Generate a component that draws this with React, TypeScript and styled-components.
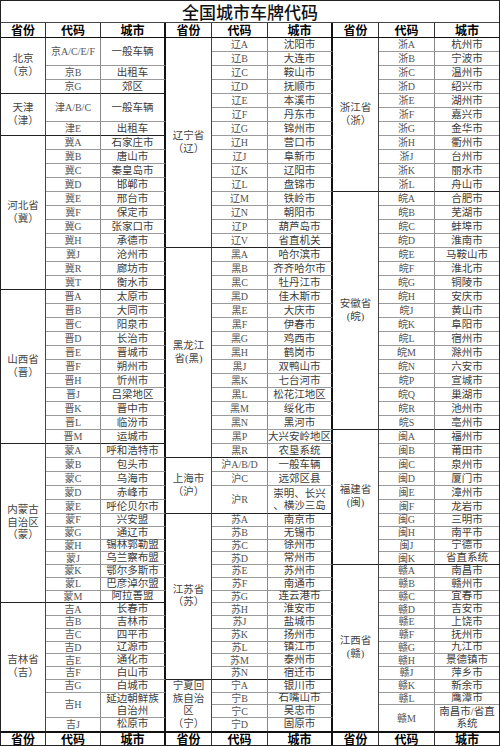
import React from 'react';
import styled, {createGlobalStyle, css} from 'styled-components';

type Entry = {code: string; city: string[]; span: number};
type Province = {name: string[]; entries: Entry[]};

const e = (code: string, city: string, span = 1): Entry => ({code, city: city.split('|'), span});
const list = (prefix: string, pairs: string) =>
    pairs.split(' ').map(p => e(prefix + p.slice(0, 1), p.slice(1)));

const groups: Province[][] = [
    [
        {name: ['北京', '（京）'], entries: [e('京A/C/E/F', '一般车辆', 2), e('京B', '出租车'), e('京G', '郊区')]},
        {name: ['天津', '（津）'], entries: [e('津A/B/C', '一般车辆', 2), e('津E', '出租车')]},
        {name: ['河北省', '（冀）'], entries: list('冀', 'A石家庄市 B唐山市 C秦皇岛市 D邯郸市 E邢台市 F保定市 G张家口市 H承德市 J沧州市 R廊坊市 T衡水市')},
        {name: ['山西省', '（晋）'], entries: list('晋', 'A太原市 B大同市 C阳泉市 D长治市 E晋城市 F朔州市 H忻州市 J吕梁地区 K晋中市 L临汾市 M运城市')},
        {name: ['内蒙古', '自治区', '（蒙）'], entries: list('蒙', 'A呼和浩特市 B包头市 C乌海市 D赤峰市 E呼伦贝尔市 F兴安盟 G通辽市 H锡林郭勒盟 J乌兰察布盟 K鄂尔多斯市 L巴彦淖尔盟 M阿拉善盟')},
        {
            name: ['吉林省', '（吉）'],
            entries: [...list('吉', 'A长春市 B吉林市 C四平市 D辽源市 E通化市 F白山市 G白城市'), e('吉H', '延边朝鲜族|自治州', 2), e('吉J', '松原市')],
        },
    ],
    [
        {name: ['辽宁省', '（辽）'], entries: list('辽', 'A沈阳市 B大连市 C鞍山市 D抚顺市 E本溪市 F丹东市 G锦州市 H营口市 J阜新市 K辽阳市 L盘锦市 M铁岭市 N朝阳市 P葫芦岛市 V省直机关')},
        {name: ['黑龙江', '省(黑)'], entries: list('黑', 'A哈尔滨市 B齐齐哈尔市 C牡丹江市 D佳木斯市 E大庆市 F伊春市 G鸡西市 H鹤岗市 J双鸭山市 K七台河市 L松花江地区 M绥化市 N黑河市 P大兴安岭地区 R农垦系统')},
        {name: ['上海市', '（沪）'], entries: [e('沪A/B/D', '一般车辆'), e('沪C', '远郊区县'), e('沪R', '崇明、长兴|、横沙三岛', 2)]},
        {name: ['江苏省', '（苏）'], entries: list('苏', 'A南京市 B无锡市 C徐州市 D常州市 E苏州市 F南通市 G连云港市 H淮安市 J盐城市 K扬州市 L镇江市 M泰州市 N宿迁市')},
        {name: ['宁夏回', '族自治', '区', '（宁）'], entries: list('宁', 'A银川市 B石嘴山市 C吴忠市 D固原市')},
    ],
    [
        {name: ['浙江省', '（浙）'], entries: list('浙', 'A杭州市 B宁波市 C温州市 D绍兴市 E湖州市 F嘉兴市 G金华市 H衢州市 J台州市 K丽水市 L舟山市')},
        {name: ['安徽省', '(皖)'], entries: list('皖', 'A合肥市 B芜湖市 C蚌埠市 D淮南市 E马鞍山市 F淮北市 G铜陵市 H安庆市 J黄山市 K阜阳市 L宿州市 M滁州市 N六安市 P宣城市 Q巢湖市 R池州市 S亳州市')},
        {name: ['福建省', '(闽)'], entries: list('闽', 'A福州市 B莆田市 C泉州市 D厦门市 E漳州市 F龙岩市 G三明市 H南平市 J宁德市 K省直系统')},
        {
            name: ['江西省', '(赣)'],
            entries: [...list('赣', 'A南昌市 B赣州市 C宜春市 D吉安市 E上饶市 F抚州市 G九江市 H景德镇市 J萍乡市 K新余市 L鹰潭市'), e('赣M', '南昌市/省直|系统', 2)],
        },
    ],
];

const FIRST_BODY_ROW = 3;
const FOOTER_ROW = 54;

type Edge = 'light' | 'dark' | 'none';

const GlobalStyle = createGlobalStyle`
    html, body {
        margin: 0;
        padding: 0;
        background: #fff;
    }
`

const Sheet = styled.div`
    box-sizing: border-box;
    width: 500px;
    height: 746px;
    border: 1px solid #222;
    display: grid;
    grid-template-columns: 45px 55px 65px 46px 56px 65px 46px 56px 64px;
    grid-template-rows: 22px 15px repeat(34, 14px) repeat(17, 12.75px) 1fr;
    font-family: "Liberation Serif", "Noto Sans CJK SC", serif;
    color: #4a4a4a;
    background: #fff;
    overflow: hidden;
`

const Title = styled.div`
    grid-column: 1 / -1;
    grid-row: 1;
    display: flex;
    align-items: center;
    justify-content: center;
    border-bottom: 1px solid #444;
    font-family: "Noto Sans CJK SC", sans-serif;
    font-size: 17px;
    line-height: 18px;
    font-weight: 500;
    color: #111;
`

const cellBase = css<{ $col: number; $row: number; $span?: number }>`
    box-sizing: border-box;
    grid-column: ${p => p.$col};
    grid-row: ${p => p.$row} / span ${p => p.$span ?? 1};
    display: flex;
    flex-direction: column;
    align-items: center;
    justify-content: center;
    text-align: center;
    white-space: nowrap;
    min-height: 0;
`

const bottomEdge = (edge: Edge) =>
    edge === 'dark' ? '1.5px solid #222' : edge === 'light' ? '1px solid #9a9a9a' : 'none';

const HeadCell = styled.div<{ $col: number; $row: number; $groupEnd: boolean; $lastCol: boolean; $footer?: boolean }>`
    ${cellBase};
    font-family: "Noto Sans CJK SC", sans-serif;
    font-size: 12px;
    font-weight: 700;
    color: #000;
    line-height: 12px;
    border-right: ${p => p.$lastCol ? 'none' : p.$groupEnd ? '2px solid #111' : '1px solid #333'};
    border-bottom: ${p => p.$footer ? 'none' : '1.5px solid #111'};
    border-top: ${p => p.$footer ? '2px solid #111' : 'none'};
`

const ProvinceCell = styled.div<{ $col: number; $row: number; $span: number; $edge: Edge }>`
    ${cellBase};
    font-size: 10.5px;
    line-height: 12.6px;
    color: #444;
    border-right: 1px solid #444;
    border-bottom: ${p => bottomEdge(p.$edge)};
`

const CodeCell = styled.div<{ $col: number; $row: number; $span: number; $edge: Edge }>`
    ${cellBase};
    font-size: 10px;
    line-height: 11px;
    color: #555;
    border-right: 1px solid #888;
    border-bottom: ${p => bottomEdge(p.$edge)};
`

const CityCell = styled.div<{ $col: number; $row: number; $span: number; $edge: Edge; $groupEnd: boolean; $lastCol: boolean }>`
    ${cellBase};
    font-size: 10.5px;
    line-height: 12px;
    color: #3c3c3c;
    border-right: ${p => p.$lastCol ? 'none' : p.$groupEnd ? '2px solid #111' : '1px solid #888'};
    border-bottom: ${p => bottomEdge(p.$edge)};
`

const Line = styled.span`
    display: block;
`

const headers = ['省份', '代码', '城市'];

const HeaderRow = ({row, footer}: { row: number; footer?: boolean }) => (
    <>
        {groups.map((_, g) =>
            headers.map((h, i) => {
                const col = g * 3 + i + 1;
                return (
                    <HeadCell key={`${row}-${col}`} $col={col} $row={row} $groupEnd={i === 2}
                              $lastCol={col === 9} $footer={footer}>
                        {h}
                    </HeadCell>
                );
            })
        )}
    </>
);

const Group = ({provinces, index}: { provinces: Province[]; index: number }) => {
    const col = index * 3 + 1;
    let row = FIRST_BODY_ROW;
    return (
        <>
            {provinces.map(p => {
                const start = row;
                const total = p.entries.reduce((s, x) => s + x.span, 0);
                row += total;
                const blockEdge: Edge = start + total >= FOOTER_ROW ? 'none' : 'dark';
                let r = start;
                return (
                    <React.Fragment key={p.name.join('')}>
                        <ProvinceCell $col={col} $row={start} $span={total} $edge={blockEdge}>
                            {p.name.map(n => <Line key={n}>{n}</Line>)}
                        </ProvinceCell>
                        {p.entries.map((en, i) => {
                            const at = r;
                            r += en.span;
                            const edge: Edge = i === p.entries.length - 1 ? blockEdge : 'light';
                            return (
                                <React.Fragment key={en.code}>
                                    <CodeCell $col={col + 1} $row={at} $span={en.span} $edge={edge}>
                                        {en.code}
                                    </CodeCell>
                                    <CityCell $col={col + 2} $row={at} $span={en.span} $edge={edge}
                                              $groupEnd $lastCol={index === 2}>
                                        {en.city.map(c => <Line key={c}>{c}</Line>)}
                                    </CityCell>
                                </React.Fragment>
                            );
                        })}
                    </React.Fragment>
                );
            })}
        </>
    );
};

export default function App() {
    return (
        <>
            <GlobalStyle/>
            <Sheet>
                <Title>全国城市车牌代码</Title>
                <HeaderRow row={2}/>
                {groups.map((g, i) => <Group key={i} provinces={g} index={i}/>)}
                <HeaderRow row={FOOTER_ROW} footer/>
            </Sheet>
        </>
    );
}
